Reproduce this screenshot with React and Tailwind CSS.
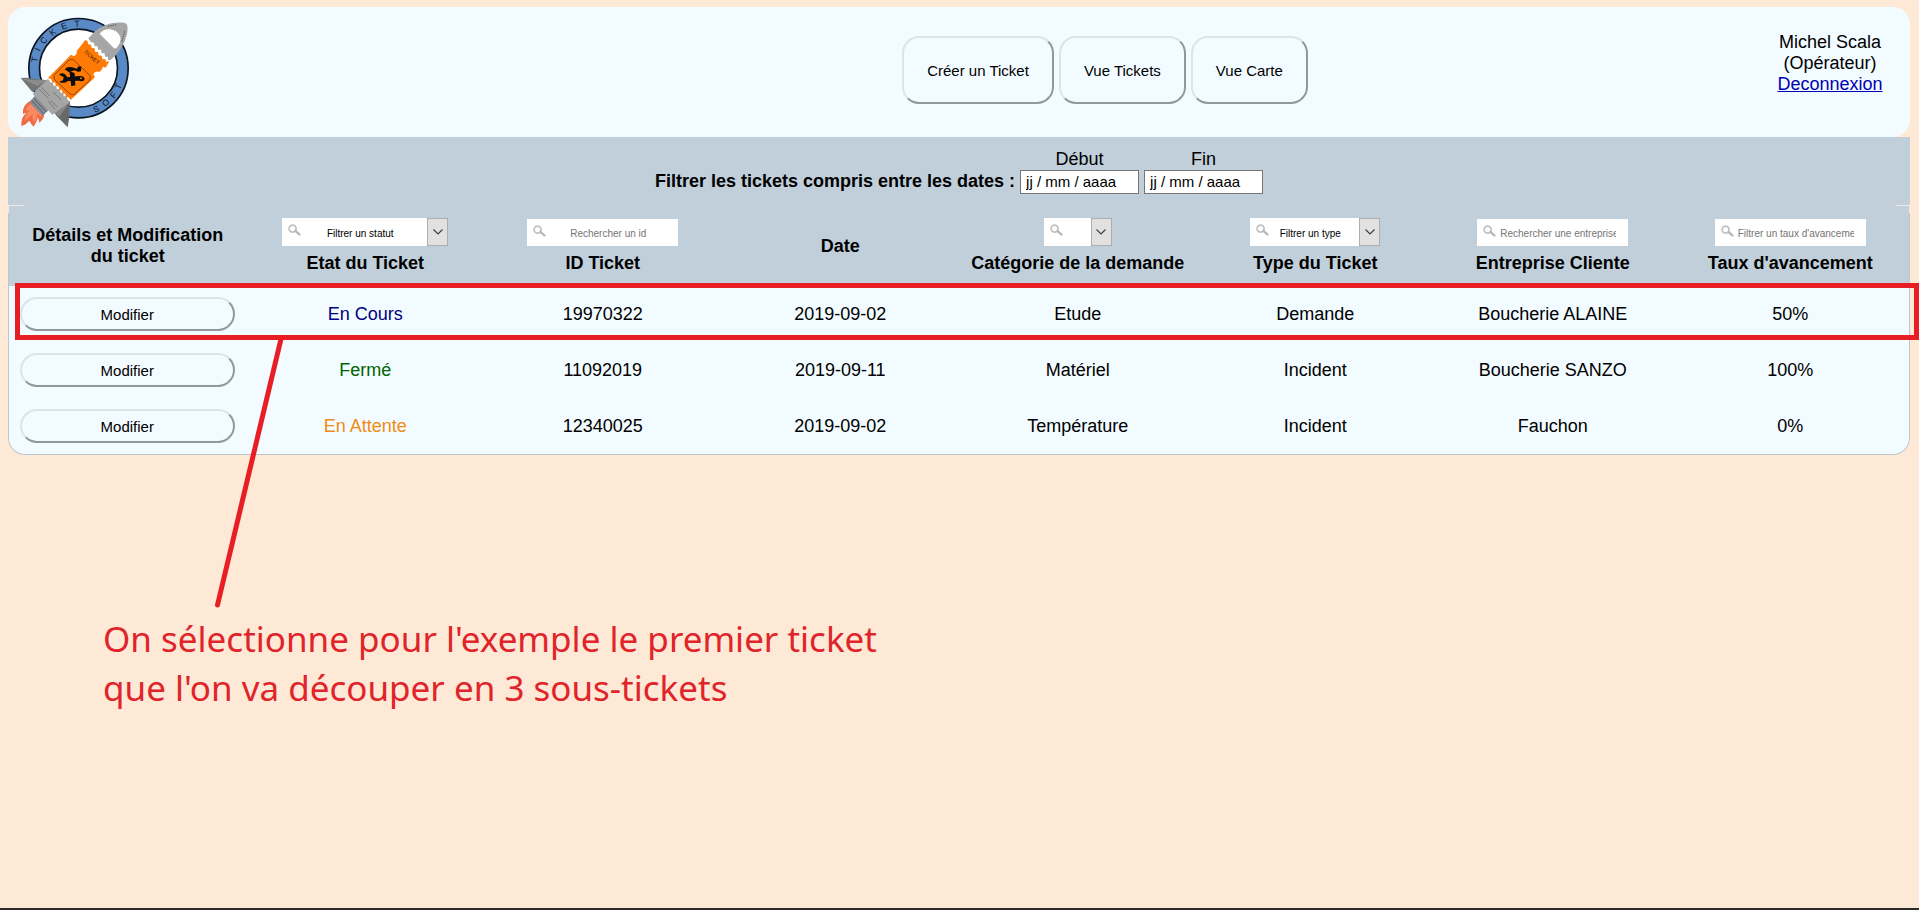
import React from "react";

const ringLetters = [
  ["T", 104, 179, -79],
  ["I", 113, 148, -65],
  ["C", 131, 121, -51],
  ["K", 158, 96, -36],
  ["E", 192, 78, -19],
  ["T", 231, 71, -2],
  ["S", 289, 327, -23],
  ["O", 317, 308, -39],
  ["F", 340, 285, -53],
  ["T", 354, 259, -66],
];

function Logo() {
  return (
    <svg viewBox="60 48 330 336" className="h-[112px] w-[110px]" role="img" aria-label="Ticket Soft">
      <circle cx="235.5" cy="204.5" r="149" fill="#5a8ac6" stroke="#0b1420" strokeWidth="5" />
      <circle cx="235.5" cy="204.5" r="117" fill="#fff" stroke="#0b1420" strokeWidth="5" />
      {ringLetters.map(([char, x, y, angle], i) => (
        <text
          key={i}
          x={x}
          y={y + 9}
          transform={`rotate(${angle} ${x} ${y})`}
          textAnchor="middle"
          fontSize="26"
          fill="#0b1420"
          className="font-['Liberation_Sans']"
        >
          {char}
        </text>
      ))}

      {/* flames */}
      <path d="M92 302 Q66 314 69 342 L79 338 Q60 356 65 379 Q80 372 88 362 Q93 373 101 380 Q112 362 114 352 L118 368 Q138 352 130 336 Z" fill="#f26a41" />
      <path d="M92 312 Q76 322 79 334 L92 328 Q74 346 74 364 L98 342 Q96 358 102 367 Q113 350 112 338 L122 352 Q128 342 122 332 Z" fill="#f98a62" />

      {/* engine and fins */}
      <polygon points="108,284 88,307 127,348 152,325" fill="#858c94" />
      <path d="M100 294 L140 336 M94 301 L133 342" stroke="#5b6068" strokeWidth="3" />
      <polygon points="62,234 80,233 142,241 120,262 97,276" fill="#747474" />
      <polygon points="62,234 96,240 142,241 112,258" fill="#8b8b8b" />
      <polygon points="210,304 208,350 203,382 170,348 162,337 188,310" fill="#696969" />
      <polygon points="210,304 188,310 162,337 178,350" fill="#868686" />
      <polygon points="144,236 152,248 159,247 160,257 169,257 170,267 180,268 181,278 190,279 191,289 200,289 203,300 210,306 157,344 98,281" fill="#a5a5a5" />
      <path d="M124 262 L149 288 M118 268 L145 296 M160 276 L183 300 M151 300 L172 321 M145 304 L165 327" stroke="#5f5f5f" strokeWidth="2" fill="none" />

      {/* nose cone */}
      <path d="M265 115 Q298 76 334 70 Q370 64 379 71 Q386 79 380 106 Q369 150 331 181 L324 179 L324 170 L315 170 L314 160 L305 160 L303 149 L294 149 L293 139 L284 139 L282 128 L273 127 Z" fill="#a6a6a6" />
      <path d="M299 101 Q311 86 331 88 Q354 92 361 111 Q364 125 354 138 Q349 148 342 145 Z" fill="#fff" />
      <path d="M324 79 L350 74 M374 94 L366 125" stroke="#444" strokeWidth="3" strokeDasharray="4 3" />

      {/* ticket */}
      <path d="M256 120 L263 124 L264 133 L273 134 L275 144 L284 145 L285 155 L294 156 L296 166 L305 167 L307 177 L316 178 L318 185 L328 184 L317 203 L309 200 L305 209 L298 216 Q286 211 280 222 L285 232 L212 300 L206 292 L198 291 L196 281 L188 280 L186 270 L178 269 L176 259 L168 258 L166 248 L157 247 L154 238 L144 234 L213 164 L222 169 Q233 162 230 153 Z" fill="#ff7b05" />
      <path d="M207 180 L219 178 L271 228 L270 240 L221 284 L211 283 L163 238 L162 226 Z" fill="none" stroke="#5d2a05" strokeWidth="2" />
      <text
        x="276"
        y="177"
        transform="rotate(43 276 170)"
        textAnchor="middle"
        fontSize="16"
        fill="#3a1c08"
        className="font-['Liberation_Sans']"
      >
        TICKET
      </text>

      {/* hammer laid over a wrench and a screwdriver */}
      <path d="M194 208 Q202 199 216 202 L231 206 L235 199 L244 200 L243 214 L234 215 L224 211 L206 216 Z" fill="#0d0d0d" />
      <path d="M208 212 L224 220 L226 256 L214 259 Z" fill="#0d0d0d" />
      <path d="M177 224 Q186 217 194 222 Q200 228 202 232 L236 228 Q252 226 254 237 Q252 247 238 242 L203 243 Q194 253 177 245 L189 241 L191 231 Z" fill="#0d0d0d" />
      <circle cx="243" cy="235" r="3" fill="#ff7b05" />
    </svg>
  );
}

function SearchIcon() {
  return (
    <svg viewBox="0 0 13 12" className="pointer-events-none absolute left-[6px] top-[6px] h-3 w-[13px]" aria-hidden="true">
      <circle cx="4.6" cy="4.6" r="3.5" fill="none" stroke="#c2c2c2" strokeWidth="1.8" />
      <path d="M7.6 7.2 L11.4 10.4" stroke="#b8b8b8" strokeWidth="2.4" strokeLinecap="round" />
    </svg>
  );
}

function SearchField({ id, placeholder }) {
  return (
    <div className="relative mx-auto mb-[7px] h-[27px] w-[151px]">
      <input
        id={id}
        type="text"
        placeholder={placeholder}
        className="block h-full w-full bg-white pl-[23px] pr-3 pt-[2px] text-center text-[10px] font-normal text-black placeholder:text-[#757575]"
      />
      <SearchIcon />
    </div>
  );
}

function SelectField({ id, option, width }) {
  return (
    <div className={`relative mx-auto mb-[7px] h-7 ${width}`}>
      <select
        id={id}
        className="block h-full w-full appearance-none bg-white pl-[27px] pr-[37px] pt-[2px] text-[10px] font-normal text-black [text-align-last:center]"
      >
        <option>{option}</option>
      </select>
      <SearchIcon />
      <span className="pointer-events-none absolute inset-y-0 right-0 flex w-[21px] items-center justify-center border border-[#adadad] bg-[#e1e1e1]">
        <svg viewBox="0 0 10 6" className="h-[6px] w-[10px]" aria-hidden="true">
          <path d="M0.5 0.5 L5 5 L9.5 0.5" fill="none" stroke="#3c3c3c" strokeWidth="1.1" />
        </svg>
      </span>
    </div>
  );
}

function DateField({ id, label }) {
  return (
    <div className="flex flex-col items-center">
      <label htmlFor={id}>{label}</label>
      <input
        id={id}
        type="text"
        placeholder="jj / mm / aaaa"
        className="h-6 w-[119px] border border-[#767676] bg-white px-[5px] pb-[2px] text-[15px] text-black placeholder:text-black"
      />
    </div>
  );
}

const columns = [
  { label: "Détails et Modification du ticket" },
  { label: "Etat du Ticket", id: "etat", select: "Filtrer un statut", width: "w-[166px]" },
  { label: "ID Ticket", id: "id-ticket", search: "Rechercher un id" },
  { label: "Date" },
  { label: "Catégorie de la demande", id: "categorie", select: "", width: "w-[68px]" },
  { label: "Type du Ticket", id: "type", select: "Filtrer un type", width: "w-[130px]" },
  { label: "Entreprise Cliente", id: "entreprise", search: "Rechercher une entreprise" },
  { label: "Taux d'avancement", id: "taux", search: "Filtrer un taux d'avancement" },
];

const tickets = [
  { etat: "En Cours", color: "text-[#000080]", cells: ["19970322", "2019-09-02", "Etude", "Demande", "Boucherie ALAINE", "50%"] },
  { etat: "Fermé", color: "text-[#006400]", cells: ["11092019", "2019-09-11", "Matériel", "Incident", "Boucherie SANZO", "100%"] },
  { etat: "En Attente", color: "text-[#f08c14]", cells: ["12340025", "2019-09-02", "Température", "Incident", "Fauchon", "0%"] },
];

const outset =
  "border-2 border-t-[#dde3e6] border-l-[#dde3e6] border-b-[#91989b] border-r-[#91989b] text-[15px] text-black";

export default function App() {
  return (
    <div className="min-h-screen overflow-hidden border-b-2 border-[#2b2b2b] bg-[#fee9d7] pl-2 pr-[9px] pt-[7px] font-['Liberation_Sans',Arial,sans-serif] text-[18px] leading-[21px] text-black">
      <header className="grid h-[130px] grid-cols-[452px_1fr_160px] rounded-[17px] bg-[#f2fbff]">
        <div className="pl-3 pt-[9px]">
          <Logo />
        </div>
        <nav className="flex items-start justify-center gap-[5px] pt-[29px]">
          {["Créer un Ticket", "Vue Tickets", "Vue Carte"].map((label) => (
            <button key={label} type="button" className={`h-[68px] rounded-[17px] px-[23px] ${outset}`}>
              {label}
            </button>
          ))}
        </nav>
        <div className="pt-[25px] text-center">
          <p>Michel Scala</p>
          <p>(Opérateur)</p>
          <a href="#deconnexion" className="text-[#0000b4] underline">
            Deconnexion
          </a>
        </div>
      </header>

      <section className="flex h-[68px] items-start justify-center gap-[5px] bg-[#c0cfd9] pt-3">
        <p className="pt-[22px] font-bold">Filtrer les tickets compris entre les dates :</p>
        <DateField id="debut" label="Début" />
        <DateField id="fin" label="Fin" />
      </section>

      <main className="relative">
        <div className="overflow-hidden rounded-b-[17px] border-x border-b border-[#bcc6cc] bg-[#f2fbff]">
          <table className="w-full table-fixed border-collapse text-center">
            <thead className="bg-[#c0cfd9]">
              <tr className="h-[81px]">
                {columns.map((col) => (
                  <th key={col.label} className="px-5 pt-px align-middle font-bold">
                    {col.search !== undefined && <SearchField id={col.id} placeholder={col.search} />}
                    {col.select !== undefined && <SelectField id={col.id} option={col.select} width={col.width} />}
                    {col.id ? (
                      <label htmlFor={col.id} className="-mx-5 block">
                        {col.label}
                      </label>
                    ) : (
                      col.label
                    )}
                  </th>
                ))}
              </tr>
            </thead>
            <tbody>
              {tickets.map((ticket) => (
                <tr key={ticket.cells[0]} className="h-14">
                  <td className="pl-[11px] pr-3">
                    <button type="button" className={`block h-[34px] w-full rounded-[17px] ${outset}`}>
                      Modifier
                    </button>
                  </td>
                  <td className={ticket.color}>{ticket.etat}</td>
                  {ticket.cells.map((cell, i) => (
                    <td key={i}>{cell}</td>
                  ))}
                </tr>
              ))}
            </tbody>
          </table>
        </div>

        {/* light seams at the upper corners of the table */}
        <span className="absolute left-0 top-0 h-2 w-4 border-l border-t border-[#f3ebe3]" />
        <span className="absolute right-0 top-0 h-2 w-[14px] border-r border-t border-[#f3ebe3]" />

        {/* callout over the first ticket */}
        <div className="pointer-events-none absolute -right-[9px] left-[7px] top-[78px] h-[57px] border-[5px] border-[#e81e25]" />
        <svg viewBox="0 0 80 280" className="pointer-events-none absolute left-[200px] top-[130px] h-[280px] w-20" aria-hidden="true">
          <path d="M73 4 L9.5 270" stroke="#e81e25" strokeWidth="5" strokeLinecap="round" />
        </svg>
        <p className="absolute left-[95px] top-[409px] whitespace-nowrap font-['Noto_Sans',sans-serif] text-[35px] leading-[49px] text-[#e0242a]">
          On sélectionne pour l'exemple le premier ticket
          <br />
          que l'on va découper en 3 sous-tickets
        </p>
      </main>
    </div>
  );
}
